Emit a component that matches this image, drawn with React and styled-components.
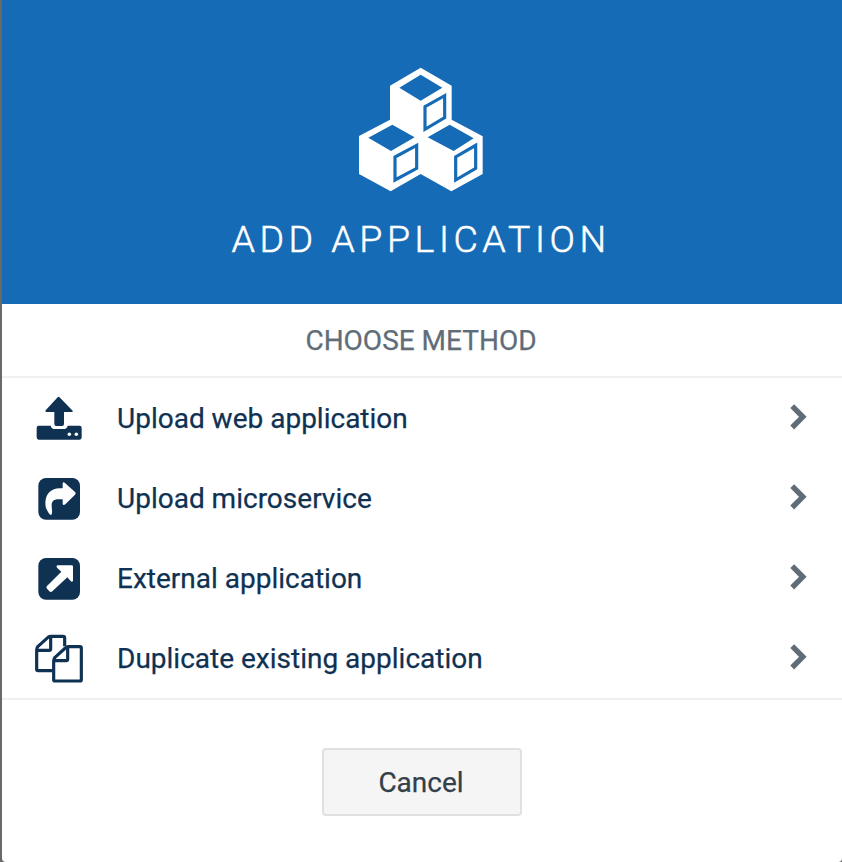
import React from "react";
import styled, { createGlobalStyle } from "styled-components";

const GlobalStyle = createGlobalStyle`
  * { box-sizing: border-box; }
  body { margin: 0; background: #696969; font-family: Roboto, sans-serif; }
`;

const Backdrop = styled.div`
  height: 862px;
  padding-left: 2px;
  background: #696969;
  overflow: hidden;
`;

const Dialog = styled.div`
  height: 862px;
  display: flex;
  flex-direction: column;
  background: #fff;
  border-radius: 0 0 4px 4px;
  overflow: hidden;
`;

const Header = styled.header`
  height: 304px;
  padding-top: 55px;
  background: #166bb6;
  display: flex;
  flex-direction: column;
  align-items: center;
`;

const HeaderIcon = styled.svg`
  width: 160px;
  height: 150px;
  margin-right: 4px;
  flex: none;
`;

const Title = styled.h1`
  margin: 10px 2px 0 0;
  font-size: 37.5px;
  line-height: 48px;
  font-weight: 300;
  letter-spacing: 4.55px;
  color: #fff;
  -webkit-text-stroke: 0.5px #fff;
  white-space: nowrap;
`;

const Subtitle = styled.h2`
  margin: 0;
  height: 74px;
  padding: 1px 2px 0 0;
  border-bottom: 2px solid #f0f0f0;
  font-size: 28px;
  line-height: 72px;
  font-weight: 400;
  text-align: center;
  color: #5f6d78;
  -webkit-text-stroke: 0.25px #5f6d78;
`;

const Methods = styled.div`
  border-bottom: 2px solid #f0f0f0;
`;

const Method = styled.div`
  height: 80px;
  padding: 0 32px 0 27px;
  display: flex;
  align-items: center;
  color: #0f3152;
`;

const MethodIcon = styled.svg`
  width: 60px;
  height: 60px;
  fill: #0f3152;
  flex: none;
`;

const MethodName = styled.span`
  flex: 1;
  padding: 2px 0 0 28px;
  font-size: 28px;
  line-height: 40px;
  -webkit-text-stroke: 0.25px #0f3152;
`;

const Chevron = styled.svg`
  width: 24px;
  height: 30px;
  fill: none;
  stroke: #5f6d78;
  stroke-width: 5.4;
`;

const Footer = styled.footer`
  padding: 48px 0 0 320px;
`;

const CancelButton = styled.button`
  width: 200px;
  height: 68px;
  padding: 2px 2px 0 0;
  border: 2px solid #e0e0e0;
  border-radius: 4px;
  background: #f5f5f5;
  color: #333f49;
  font: 400 28px/40px Roboto, sans-serif;
  -webkit-text-stroke: 0.25px #333f49;
`;

const methods = [
  {
    name: "Upload web application",
    box: "27 9 180 180",
    icon: (
      <>
        <path d="M117 35L158 77Q160 81 155 81H132V117Q132 123 126 123H109Q103 123 103 117V81H80Q74 81 77 76L113 37Q117 33 121 37Z" />
        <path d="M56 122H92Q94 132 105 132H130Q141 132 143 122H179Q185 122 185 129V157Q185 164 179 164H56Q50 164 50 157V129Q50 122 56 122Z" />
        <circle cx="148" cy="148" r="5.3" fill="#fff" />
        <circle cx="169" cy="148" r="5.3" fill="#fff" />
      </>
    ),
  },
  {
    name: "Upload microservice",
    box: "27 249 180 180",
    icon: (
      <>
        <rect x="55" y="279" width="125" height="125" rx="23" />
        <path
          fill="#fff"
          d="M128 295Q129 290 134 293L166 322Q168 326 165 329L136 358Q130 363 128 357V343H116C101 343 95 349 95 361C95 373 98 380 95 388Q93 392 89 388C80 376 76 367 76 353C77 326 94 310 119 310H128Z"
        />
      </>
    ),
  },
  {
    name: "External application",
    box: "27 9 180 180",
    icon: (
      <>
        <rect x="55" y="39" width="125" height="125" rx="23" />
        <path
          fill="#fff"
          d="M112 61H155Q159 61 159 65V108Q156 112 152 108L142 97L97 139Q93 143 88 139L81 131Q77 127 81 123L124 80L111 68Q107 64 112 61Z"
        />
      </>
    ),
  },
  {
    name: "Duplicate existing application",
    box: "27 249 180 180",
    icon: (
      <g fill="none" stroke="#0f3152" strokeWidth="9.5" strokeLinejoin="round">
        <path d="M97 377H54Q50 377 50 373V314Q50 309 54 304L84 277Q88 274 93 274H129Q134 274 134 279V304" />
        <path d="M92 275V311Q92 316 87 316H52" />
        <path d="M145 305H180Q184 305 184 309V404Q184 408 180 408H105Q101 408 101 404V347Q101 342 105 337L136 309Q140 305 145 305Z" />
        <path d="M143 306V342Q143 347 138 347H103" />
      </g>
    ),
  },
];

export default function App() {
  return (
    <>
      <GlobalStyle />
      <Backdrop>
        <Dialog>
          <Header>
            <HeaderIcon viewBox="0 0 480 450">
              <path
                fill="#fff"
                d="M242 38L335 92V194L428 244V357L334 409L242 357L152 409L57 357V243L150 194V92Z"
              />
              <path
                fill="#166bb6"
                d="M242 59L307 98L242 137L178 98ZM157 209L224 247L153 288L85 248ZM329 209L401 250L341 288L263 247Z"
              />
              <g fill="none" stroke="#166bb6" strokeWidth="9.5">
                <path d="M314 122V188L255 223V155Z" />
                <path d="M230 271V340L165 375V306Z" />
                <path d="M407 271V340L347 375V306Z" />
              </g>
            </HeaderIcon>
            <Title>ADD APPLICATION</Title>
          </Header>
          <Subtitle>CHOOSE METHOD</Subtitle>
          <Methods>
            {methods.map((m) => (
              <Method key={m.name}>
                <MethodIcon viewBox={m.box}>{m.icon}</MethodIcon>
                <MethodName>{m.name}</MethodName>
                <Chevron viewBox="0 0 24 30">
                  <path d="M6.2 3.1L16.8 13.8L6.2 24.5" />
                </Chevron>
              </Method>
            ))}
          </Methods>
          <Footer>
            <CancelButton>Cancel</CancelButton>
          </Footer>
        </Dialog>
      </Backdrop>
    </>
  );
}
